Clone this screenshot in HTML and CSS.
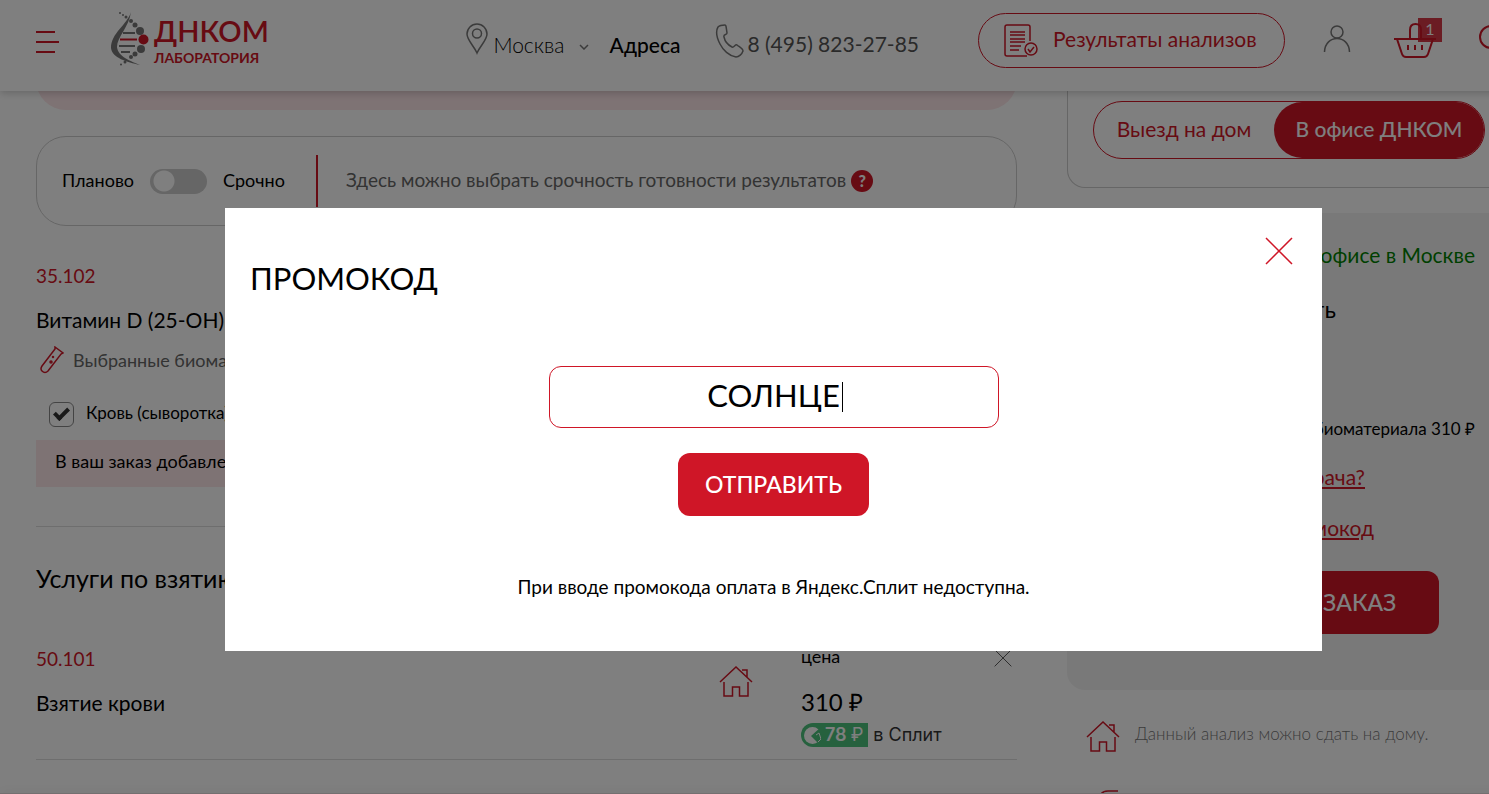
FILE: index.html
```html
<!DOCTYPE html>
<html lang="ru">

<head>
    <meta charset="UTF-8">
    <title>ДНКОМ - корзина</title>
    <link rel="stylesheet" href="styles.css">
</head>

<body>
    <svg class="hidden">
        <symbol id="house" viewBox="0 0 34 32">
            <path d="M1 16 L17 1 L33 16 M5 16 V30 H13.500 V21 H20.500 V30 H29 V16 M23 4 H28 V11" />
        </symbol>
        <symbol id="cross" viewBox="0 0 28 28">
            <path d="M1 1 L27 27 M27 1 L1 27" />
        </symbol>
    </svg>

    <header class="header">
        <button class="menu" type="button" aria-label="Меню"><i></i><i></i><i></i></button>
        <a class="logo" href="#">
            <svg width="38" height="54" viewBox="0 0 38 54">
                <path fill="#777" d="M20 0 C16 13 0 21 0 36 C1 46 16 50 29 53 C20 49 7 45 6 35 C6 25 18 15 20 0Z" />
                <g stroke="#777" stroke-width="2"><path d="M12 21 H24 M8 34 H24 M10 40 H19" /><path stroke="#cf1627" d="M9 27.500 H26" /></g>
                <g fill="#777">
                    <circle cx="9" cy="1" r="1" /><circle cx="12" cy="3" r="1" /><circle cx="15" cy="5" r="1.500" />
                    <circle cx="20" cy="9" r="2" /><circle cx="24" cy="13" r="2.500" /><circle cx="29" cy="19" r="4" />
                    <circle cx="30" cy="37" r="4" /><circle cx="24" cy="42" r="2.500" /><circle cx="20" cy="45" r="2" />
                    <circle cx="14" cy="50" r="1.500" /><circle cx="10" cy="52.500" r="1" />
                </g>
                <circle cx="32.500" cy="27.500" r="5" fill="#cf1627" />
            </svg>
            <span class="logo-text"><b>ДНКОМ</b><small>ЛАБОРАТОРИЯ</small></span>
        </a>
        <a class="city" href="#">
            <svg class="line" width="22" height="32" viewBox="0 0 22 32">
                <path d="M11 30 C8 23 1 17 1 11 A10 10 0 0 1 21 11 C21 17 14 23 11 30Z" /><circle cx="11" cy="10.500" r="4.500" />
            </svg>
            <span>Москва</span>
            <svg class="line arrow" width="10" height="6" viewBox="0 0 10 6"><path d="M1 1 L5 5 L9 1" /></svg>
        </a>
        <a class="address" href="#">Адреса</a>
        <a class="phone" href="#">
            <svg class="line" width="29" height="34" viewBox="0 0 29 34">
                <path d="M3 3 C5 1 8 1 10 1 C11 1 11 2 12 9 C12 11 8 10 9 13 C10 18 13 21 17 23 C19 24 20 20 22 21 C26 24 28 25 28 27 C27 30 24 33 21 33 C14 32 8 26 5 20 C2 14 0 8 3 3Z" />
            </svg>
            <span>8 (495) 823-27-85</span>
        </a>
        <a class="results" href="#">
            <svg class="line" width="34" height="34" viewBox="0 0 34 34">
                <path d="M23 32 H3 Q1 32 1 30 V3 Q1 1 3 1 H24 Q26 1 26 3 V17 M6 8 H21 M6 11 H21 M6 15 H21 M6 18 H21 M6 22 H17 M6 26 H15" />
                <circle cx="27" cy="25" r="6" /><path d="M24 25 L26 28 L30 23" />
            </svg>
            <span>Результаты анализов</span>
        </a>
        <a class="user" href="#" aria-label="Кабинет">
            <svg class="line" width="28" height="28" viewBox="0 0 28 28"><circle cx="14" cy="7" r="6" /><path d="M1.500 27 C2 9 26 9 26.500 27" /></svg>
        </a>
        <a class="basket" href="#" aria-label="Корзина">
            <svg class="line" width="42" height="36" viewBox="0 0 42 36">
                <path d="M0 16 H42 M3 16 L8 31 Q9 34 12 34 H30 Q33 34 34 31 L39 16 M16 16 V7 Q16 1 21.500 1 Q27 1 27 7 V16 M14 22 V27 M21 22 V27 M28 22 V27" />
            </svg>
            <span class="count">1</span>
        </a>
        <a class="search" href="#" aria-label="Поиск">
            <svg class="line" width="32" height="32" viewBox="0 0 32 32"><circle cx="12" cy="12" r="11" /><path d="M20 20 L31 31" /></svg>
        </a>
    </header>

    <main class="page">
        <section class="order">
            <div class="banner"></div>

            <div class="urgency">
                <label class="switch"><span>Планово</span> <input type="checkbox" role="switch"> <span>Срочно</span></label>
                <p><span>Здесь можно выбрать срочность готовности результатов</span> <button class="hint" type="button">?</button></p>
            </div>

            <article class="item">
                <p class="code">35.102</p>
                <h3>Витамин D (25-OH)</h3>
                <p class="bio">
                    <svg class="line" width="24" height="28" viewBox="0 0 24 28">
                        <path d="M15 1 L23 7 L21 8 L8 25 Q5 28 2 25 Q0 23 2 20 L15 3Z" /><circle cx="11" cy="16" r="1" /><circle cx="13" cy="11" r="0.500" />
                    </svg>
                    Выбранные биоматериалы
                </p>
                <label class="tick"><input type="checkbox" checked> <span>Кровь (сыворотка)</span></label>
                <p class="added">В ваш заказ добавлена услуга</p>
            </article>

            <h2>Услуги по взятию</h2>

            <article class="item service">
                <div class="name">
                    <p class="code">50.101</p>
                    <h3>Взятие крови</h3>
                </div>
                <svg class="line house" width="34" height="32"><use href="#house" /></svg>
                <div class="cost">
                    <p>цена</p>
                    <p class="sum">310 ₽</p>
                    <p class="split">
                        <span class="badge">
                            <svg width="17" height="17" viewBox="0 0 17 17"><circle cx="8.500" cy="8.500" r="8.500" fill="#fff" /><path d="M7 9 L17 0 V17 L13 15Z" fill="#4cc27d" /><path d="M12 8 L15 6 L17 12 L14 15" fill="none" stroke="#fff" /></svg>
                            <b>78</b> ₽
                        </span>
                        в Сплит
                    </p>
                </div>
                <button class="remove" type="button" aria-label="Удалить"><svg class="line" width="18" height="18"><use href="#cross" /></svg></button>
            </article>
        </section>

        <aside class="side">
            <div class="place">
                <div class="tabs">
                    <button type="button">Выезд на дом</button>
                    <button type="button" class="active">В офисе ДНКОМ</button>
                </div>
            </div>

            <div class="total">
                <p class="office">Взятие материала в офисе в Москве</p>
                <p class="price">Общая стоимость</p>
                <p class="extra">Включая взятие биоматериала 310 ₽</p>
                <a class="doctor" href="#">Направление врача?</a>
                <a class="promocode" href="#">Ввести промокод</a>
                <button class="btn" type="button">ОФОРМИТЬ ЗАКАЗ</button>
            </div>

            <ul class="notes">
                <li><svg class="line" width="34" height="32"><use href="#house" /></svg> <span>Данный анализ можно сдать на дому.</span></li>
                <li><svg class="line" width="34" height="32" viewBox="0 0 34 32"><path d="M14 32 V10 Q14 2 22 2 H32" /></svg></li>
            </ul>
        </aside>
    </main>

    <div class="bottom"></div>

    <div class="overlay">
        <form class="modal" action="#" role="dialog" aria-labelledby="title">
            <button class="close" type="button" aria-label="Закрыть"><svg class="line" width="28" height="28"><use href="#cross" /></svg></button>
            <h1 id="title">ПРОМОКОД</h1>
            <label class="field"><input type="text" value="СОЛНЦЕ" aria-label="Промокод"></label>
            <button class="btn" type="submit">ОТПРАВИТЬ</button>
            <p>При вводе промокода оплата в Яндекс.Сплит недоступна.</p>
        </form>
    </div>
</body>

</html>
```
FILE: styles.css
```css
/*общее*/
* {
    box-sizing: border-box;
}

html {
    height: 100%;
    overflow: hidden;
}

/*страница немного шире окна*/
body {
    position: relative;
    width: calc(100% + 58px);
    height: 100%;
    margin: 0;
    overflow: hidden;
    font-family: Lato, "Open Sans", sans-serif;
    font-size: 19px;
    line-height: 24px;
    color: #000;
    background: #fff;
}

h1, h2, h3, p, ul {
    margin: 0;
    padding: 0;
    font-weight: 400;
}

a {
    color: inherit;
    text-decoration: none;
}

button {
    font-family: inherit;
    font-size: inherit;
    line-height: inherit;
    padding: 0;
    border: 0;
    background: none;
    color: inherit;
}

svg {
    flex: none;
}

.line {
    fill: none;
    stroke: #cf1627;
    stroke-width: 1.5;
}

.hidden {
    display: none;
}

.btn {
    height: 63px;
    padding-bottom: 2px;
    border-radius: 12px;
    background: #cf1627;
    color: #fff;
    font-size: 23px;
    font-weight: 500;
}

/*шапка*/
.header {
    position: relative;
    z-index: 1;
    display: flex;
    align-items: center;
    height: 91px;
    padding: 0 36px 10px;
    font-size: 21px;
    background: #fff;
    box-shadow: 0 2px 8px rgba(0, 0, 0, .2);
}

.menu {
    display: grid;
    gap: 8px;
    width: 24px;
    margin: 2px 51px 0 0;
}

.menu i {
    width: 19px;
    height: 2px;
    background: #cf1627;
}

.menu i:nth-child(2) {
    width: 23px;
}

.logo {
    display: flex;
    gap: 5px;
    width: 160px;
    margin: 0 auto 4px 0;
    color: #cf1627;
}

.logo-text {
    display: flex;
    flex-direction: column;
    gap: 2px;
    padding-top: 2px;
}

.logo b {
    font-size: 29px;
    line-height: 34px;
    font-weight: 600;
}

.logo small {
    font-size: 14px;
    line-height: 16px;
    font-weight: 700;
}

.city {
    display: flex;
    align-items: center;
    gap: 5px;
    margin-bottom: 4px;
    font-weight: 300;
}

.city span, .address {
    padding-top: 12px;
}

.city .line, .phone .line, .user .line {
    stroke: #777;
}

.arrow {
    margin: 16px 0 0 10px;
}

.address {
    margin: 0 35px 4px 20px;
    font-weight: 500;
}

.phone {
    display: flex;
    align-items: center;
    gap: 3px;
    margin-right: 59px;
    color: #555;
}

.phone span {
    padding-top: 6px;
}

.results {
    display: flex;
    align-items: center;
    gap: 15px;
    width: 307px;
    height: 55px;
    padding: 0 25px;
    border: 1px solid #cf1627;
    border-radius: 28px;
    color: #cf1627;
}

.results span {
    padding-bottom: 3px;
}

.user {
    margin: 0 43px 4px 38px;
}

.user svg, .basket svg, .search svg {
    display: block;
}

.basket {
    position: relative;
    margin-right: 43px;
}

.basket .line, .search .line {
    stroke-width: 2;
}

.count {
    position: absolute;
    top: -5px;
    right: -6px;
    width: 24px;
    height: 24px;
    background: rgba(207, 22, 39, .85);
    color: #fff;
    font-size: 16px;
    line-height: 22px;
    text-align: center;
}

/*корзина*/
.page {
    display: grid;
    grid-template-columns: minmax(0, 981fr) minmax(0, 444fr);
    gap: 50px;
    padding: 0 36px;
}

.banner {
    height: 60px;
    margin: -41px 0 26px;
    border-radius: 30px;
    background: #fde6e9;
}

.urgency {
    display: flex;
    align-items: center;
    gap: 28px;
    height: 90px;
    padding: 0 25px;
    border: 1px solid #ccc;
    border-radius: 30px;
}

.urgency span {
    padding-bottom: 3px;
}

.urgency p {
    display: flex;
    gap: 5px;
    align-items: center;
    color: #666;
}

.switch {
    display: flex;
    align-items: center;
    gap: 16px;
    height: 52px;
    padding-right: 31px;
    border-right: 2px solid #cf1627;
    font-size: 18px;
}

.switch input {
    appearance: none;
    width: 57px;
    height: 25px;
    margin: 0;
    border-radius: 13px;
    background: radial-gradient(circle at 14px 12px, #fff 10px, #ccc 11px);
}

.hint {
    width: 22px;
    height: 22px;
    border-radius: 50%;
    background: #cf1627;
    color: #fff;
    font-size: 16px;
    line-height: 22px;
    font-weight: 900;
}

.item {
    padding: 38px 0 39px;
    border-bottom: 1px solid #ddd;
}

.code {
    margin-bottom: 20px;
    color: #cf1627;
}

h3 {
    font-size: 21px;
}

.bio {
    display: flex;
    align-items: center;
    gap: 9px;
    margin-top: 14px;
    padding-left: 4px;
    color: #666;
    font-size: 18px;
}

.tick {
    display: flex;
    align-items: center;
    gap: 12px;
    height: 25px;
    margin: 28px 0 13px 13px;
    font-size: 17px;
}

.tick span {
    padding-bottom: 3px;
}

.tick input {
    appearance: none;
    position: relative;
    width: 25px;
    height: 25px;
    margin: 0;
    border: 1px solid #888;
    border-radius: 6px;
}

.tick input::after {
    content: "";
    position: absolute;
    left: 4px;
    top: 5px;
    width: 11px;
    height: 5px;
    border: solid #333;
    border-width: 0 0 4px 4px;
    transform: rotate(-45deg);
}

.added {
    padding: 9px 19px 14px;
    background: #fde6e9;
    font-size: 18px;
}

h2 {
    padding: 36px 0 26px;
    font-size: 25px;
    line-height: 30px;
}

.service {
    display: flex;
    padding: 25px 0 12px;
}

.name {
    flex: 1;
    padding-top: 3px;
}

.house {
    margin: 22px 48px 0 0;
}

.cost {
    width: 188px;
    font-size: 18px;
}

.sum {
    margin: 22px 0 9px;
    font-size: 24px;
}

.split {
    display: flex;
    align-items: center;
    gap: 5px;
    color: #333;
    font-family: Inter, sans-serif;
}

.badge {
    display: flex;
    align-items: center;
    gap: 4px;
    height: 24px;
    padding: 0 5px 0 3px;
    border-radius: 12px 0 0 12px;
    background: #4cc27d;
    color: #fff;
}

.badge b {
    font-weight: 600;
}

.remove {
    width: 28px;
    height: 32px;
}

.remove .line {
    stroke: #555;
}

/*правая колонка*/
.place {
    margin-bottom: 25px;
    padding: 10px 25px 28px;
    border: 1px solid #ccc;
    border-top: 0;
    border-radius: 0 0 18px 18px;
}

.tabs {
    display: flex;
    height: 58px;
    border: 1px solid #cf1627;
    border-radius: 29px;
    color: #cf1627;
    font-size: 21px;
}

.tabs button {
    flex: 180;
    padding-bottom: 3px;
}

.tabs .active {
    flex: 210;
    border-radius: 29px;
    background: #cf1627;
    color: #fff;
    font-weight: 500;
}

.total {
    display: flex;
    flex-direction: column;
    align-items: flex-start;
    padding: 30px 26px 56px;
    border-radius: 18px;
    background: #f3f3f3;
    font-size: 21px;
    text-align: right;
}

.office, .extra {
    width: 382px;
}

.office {
    color: green;
}

.price {
    width: 243px;
    margin: 30px 0 96px;
    font-size: 24px;
}

.extra {
    margin-bottom: 24px;
    font-size: 17px;
}

.total a {
    margin-bottom: 27px;
    color: #cf1627;
    text-decoration: underline;
}

.doctor {
    width: 272px;
}

.promocode {
    width: 281px;
}

.total .btn {
    align-self: center;
    margin-top: 4px;
    padding: 0 43px 2px;
}

.notes {
    padding: 31px 19px;
    list-style: none;
    color: #777;
    font-size: 17px;
    font-weight: 300;
}

.notes li {
    display: flex;
    align-items: center;
    gap: 15px;
    margin-bottom: 36px;
}

.notes span {
    padding-bottom: 6px;
}

.bottom {
    position: absolute;
    bottom: 0;
    width: 100%;
    height: 1px;
    background: #e8dfe0;
    box-shadow: 0 0 12px rgba(0, 0, 0, .3);
}

/*окно промокода*/
.overlay {
    position: absolute;
    z-index: 2;
    inset: 0;
    display: flex;
    align-items: flex-start;
    justify-content: center;
    padding-top: 208px;
    background: rgba(0, 0, 0, .5);
}

.modal {
    position: relative;
    display: flex;
    flex-direction: column;
    align-items: center;
    width: calc(100% - 450px);
    padding: 50px 25px 52px;
    background: #fff;
}

.modal h1 {
    align-self: stretch;
    margin-bottom: 68px;
    font-size: 31px;
    line-height: 40px;
}

.field {
    position: relative;
}

/*курсор после текста*/
.field::after {
    content: "";
    position: absolute;
    left: calc(50% + 68px);
    top: 16px;
    width: 1px;
    height: 30px;
    background: #000;
}

.field input {
    display: block;
    width: 450px;
    height: 62px;
    padding: 0 10px 4px;
    border: 1px solid #cf1627;
    border-radius: 12px;
    outline: 0;
    background: #fff;
    font-family: inherit;
    font-size: 31px;
    text-align: center;
}

.modal .btn {
    margin: 25px 0 59px;
    padding: 0 27px 2px;
}

.close {
    position: absolute;
    top: 29px;
    right: 29px;
    height: 28px;
}
```
